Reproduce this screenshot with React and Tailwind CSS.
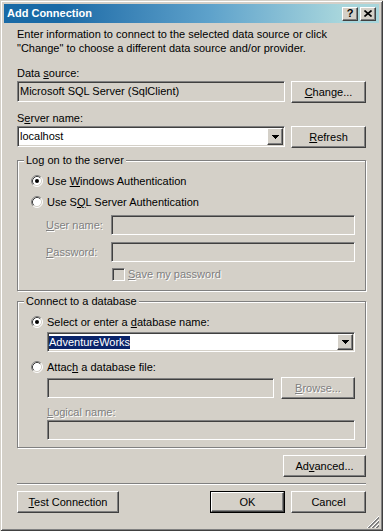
import React from "react";

const raised =
  "flex items-center justify-center bg-[#d4d0c8] border border-t-white border-l-white border-r-[#404040] border-b-[#404040] shadow-[inset_-1px_-1px_0_#808080]";
const sunken =
  "border border-t-[#808080] border-l-[#808080] border-r-white border-b-white shadow-[inset_1px_1px_0_#404040,inset_-1px_-1px_0_#d4d0c8]";
const dis = "text-[#808080] [text-shadow:1px_1px_0_#ffffff]";

function U({ children }) {
  return <span className="underline decoration-1 underline-offset-[1px]">{children}</span>;
}

function Radio({ checked }) {
  return (
    <svg width="12" height="12" viewBox="0 0 12 12" className="shrink-0">
      <circle cx="6" cy="6" r="5" fill="#ffffff" />
      <path d="M2.11 9.89 A5.5 5.5 0 0 1 9.89 2.11" fill="none" stroke="#808080" strokeWidth="1" />
      <path d="M9.89 2.11 A5.5 5.5 0 0 1 2.11 9.89" fill="none" stroke="#ffffff" strokeWidth="1" />
      <path d="M2.82 9.18 A4.5 4.5 0 0 1 9.18 2.82" fill="none" stroke="#404040" strokeWidth="1" />
      <path d="M9.18 2.82 A4.5 4.5 0 0 1 2.82 9.18" fill="none" stroke="#d4d0c8" strokeWidth="1" />
      {checked && <circle cx="6" cy="6" r="2" fill="#000000" />}
    </svg>
  );
}

function Arrow() {
  return (
    <svg width="7" height="4" viewBox="0 0 7 4">
      <path d="M0 0h7v1h-1v1h-1v1h-1v1h-1v-1h-1v-1h-1v-1h-1z" fill="#000000" />
    </svg>
  );
}

function Combo({ className, children }) {
  return (
    <div className={"flex bg-white p-[1px] " + sunken + " " + className}>
      <div className="flex flex-1 items-center pl-[1px]">{children}</div>
      <div className={raised + " w-[16px] h-full"}>
        <Arrow />
      </div>
    </div>
  );
}

function Grip() {
  return (
    <svg width="12" height="12" viewBox="0 0 12 12" className="absolute right-[4px] bottom-[3px]">
      <path d="M12 0 L0 12 M12 4 L4 12 M12 8 L8 12" stroke="#ffffff" strokeWidth="1" />
      <path d="M12 1 L1 12 M12 2 L2 12 M12 5 L5 12 M12 6 L6 12 M12 9 L9 12 M12 10 L10 12" stroke="#808080" strokeWidth="1" />
    </svg>
  );
}

export default function App() {
  return (
    <div className="relative w-[383px] h-[531px] bg-[#d4d0c8] p-[4px] shadow-[inset_1px_1px_0_#d4d0c8,inset_-1px_-1px_0_#404040,inset_2px_2px_0_#ffffff,inset_-2px_-2px_0_#808080] font-['Liberation_Sans',Arial,sans-serif] text-[11px] text-black">
      {/* Title bar */}
      <div className="flex h-[19px] items-center justify-between pl-[3px] pr-[3px] bg-linear-to-r from-[#196aa6] from-15% via-[#5ea2cb] via-55% to-[#a8d6dc] to-90%">
        <span className="font-bold text-white text-[11px]">Add Connection</span>
        <div className="flex gap-[2px]">
          <div className={raised + " w-[16px] h-[14px]"}>
            <span className="font-bold text-[11px] leading-[11px]">?</span>
          </div>
          <div className={raised + " w-[16px] h-[14px]"}>
            <svg width="8" height="7" viewBox="0 0 8 7">
              <path d="M0.5 0.5 L7.5 6.5 M7.5 0.5 L0.5 6.5" stroke="#000000" strokeWidth="1.6" />
            </svg>
          </div>
        </div>
      </div>

      {/* Body */}
      <div className="flex flex-col px-[13px]">
        <p className="mt-[4px] leading-[14px]">
          Enter information to connect to the selected data source or click
          <br />
          "Change" to choose a different data source and/or provider.
        </p>

        <div className="mt-[11px] leading-[14px]">
          Data <U>s</U>ource:
        </div>
        <div className="mt-[1px] flex items-start justify-between">
          <div className={sunken + " w-[268px] h-[21px] flex items-center pl-[2px] bg-[#d4d0c8]"}>
            Microsoft SQL Server (SqlClient)
          </div>
          <div className={raised + " w-[75px] h-[22px]"}>
            <span>
              <U>C</U>hange...
            </span>
          </div>
        </div>

        <div className="mt-[8px] leading-[14px]">
          S<U>e</U>rver name:
        </div>
        <div className="mt-[1px] flex items-start justify-between">
          <Combo className="w-[268px] h-[21px]">localhost</Combo>
          <div className={raised + " w-[75px] h-[22px]"}>
            <span>
              <U>R</U>efresh
            </span>
          </div>
        </div>

        {/* Log on group */}
        <fieldset className="mt-[5px] w-full border border-[#808080] shadow-[inset_1px_1px_0_#ffffff,1px_1px_0_#ffffff] pb-[9px]">
          <legend className="ml-[6px] px-[2px] leading-[14px] bg-[#d4d0c8]">Log on to the server</legend>
          <div className="pt-[7px] pl-[13px] flex items-center gap-[4px] h-[21px] box-border">
            <Radio checked />
            <span className="leading-[14px]">
              Use <U>W</U>indows Authentication
            </span>
          </div>
          <div className="mt-[7px] pl-[13px] flex items-center gap-[4px] h-[14px]">
            <Radio />
            <span className="leading-[14px]">
              Use S<U>Q</U>L Server Authentication
            </span>
          </div>
          <div className="mt-[6px] pl-[28px] pr-[10px] flex items-center">
            <span className={"w-[65px] " + dis}>
              <U>U</U>ser name:
            </span>
            <div className={sunken + " flex-1 h-[20px] bg-[#d4d0c8]"} />
          </div>
          <div className="mt-[7px] pl-[28px] pr-[10px] flex items-center">
            <span className={"w-[65px] " + dis}>
              <U>P</U>assword:
            </span>
            <div className={sunken + " flex-1 h-[20px] bg-[#d4d0c8]"} />
          </div>
          <div className="mt-[6px] pl-[94px] flex items-center gap-[3px] h-[13px]">
            <div className={sunken + " w-[13px] h-[13px] bg-[#d4d0c8]"} />
            <span className={"leading-[13px] " + dis}>
              <U>S</U>ave my password
            </span>
          </div>
        </fieldset>

        {/* Connect group */}
        <fieldset className="mt-[3px] w-full border border-[#808080] shadow-[inset_1px_1px_0_#ffffff,1px_1px_0_#ffffff] pb-[7px]">
          <legend className="ml-[6px] px-[2px] leading-[14px] bg-[#d4d0c8]">Connect to a database</legend>
          <div className="mt-[7px] pl-[13px] flex items-center gap-[4px] h-[14px]">
            <Radio checked />
            <span className="leading-[14px]">
              Select or enter a <U>d</U>atabase name:
            </span>
          </div>
          <div className="mt-[3px] ml-[29px] mr-[10px]">
            <Combo className="w-full h-[20px]">
              <span className="bg-[#0a246a] text-white leading-[13px] -ml-[1px]">AdventureWorks</span>
            </Combo>
          </div>
          <div className="mt-[8px] pl-[13px] flex items-center gap-[4px] h-[14px]">
            <Radio />
            <span className="leading-[14px]">
              Attac<U>h</U> a database file:
            </span>
          </div>
          <div className="mt-[3px] ml-[29px] mr-[10px] flex items-center gap-[7px] h-[22px]">
            <div className={sunken + " flex-1 h-[20px] bg-[#d4d0c8]"} />
            <div className={raised + " w-[74px] h-[22px]"}>
              <span className={dis}>
                <U>B</U>rowse...
              </span>
            </div>
          </div>
          <div className={"mt-[6px] ml-[29px] leading-[14px] " + dis}>
            <U>L</U>ogical name:
          </div>
          <div className={"mt-[1px] ml-[29px] mr-[10px] h-[20px] bg-[#d4d0c8] " + sunken} />
        </fieldset>

        <div className="mt-[7px] flex justify-end">
          <div className={raised + " w-[83px] h-[22px]"}>
            <span>
              Ad<U>v</U>anced...
            </span>
          </div>
        </div>

        <div className="mt-[6px] h-[2px] border-t border-t-[#808080] border-b border-b-white" />

        <div className="mt-[6px] flex items-center gap-[6px]">
          <div className={raised + " w-[102px] h-[22px]"}>
            <span>
              <U>T</U>est Connection
            </span>
          </div>
          <div className="flex-1" />
          <div className="w-[75px] h-[22px] border border-black">
            <div className={raised + " w-full h-full"}>
              <span>OK</span>
            </div>
          </div>
          <div className={raised + " w-[75px] h-[22px]"}>
            <span>Cancel</span>
          </div>
        </div>
      </div>
      <Grip />
    </div>
  );
}
